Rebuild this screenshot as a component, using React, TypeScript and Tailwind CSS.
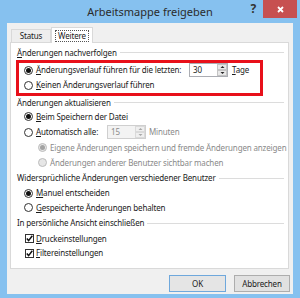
import clsx from "clsx";
import { ReactNode } from "react";

const Radio = ({ checked, disabled }: { checked?: boolean; disabled?: boolean }) => (
  <span
    className={clsx(
      "flex h-[9px] w-[9px] shrink-0 items-center justify-center rounded-full border",
      disabled ? "border-[#bcbcbc] bg-[#e6e6e6]" : "border-[#333] bg-white"
    )}
  >
    {checked && (
      <span className={clsx("h-[5px] w-[5px] rounded-full", disabled ? "bg-[#a3a3a3]" : "bg-[#111]")} />
    )}
  </span>
);

const Checkbox = () => (
  <span className="flex h-[9px] w-[9px] shrink-0 items-center justify-center border border-[#333] bg-white">
    <svg width="7" height="7" viewBox="0 0 7 7">
      <path d="M0.8 3.6 L2.6 5.6 L6.3 0.8" fill="none" stroke="#111" strokeWidth="1.5" />
    </svg>
  </span>
);

const SpinBox = ({ value, disabled }: { value: string; disabled?: boolean }) => (
  <div
    className={clsx(
      "flex h-[14px] w-[39px] shrink-0 border",
      disabled ? "border-[#cfcfcf] bg-[#f3f3f3] text-[#8a8a8a]" : "border-[#abadb3] bg-white"
    )}
  >
    <span className="flex-1 pl-[3px] leading-[12px]">{value}</span>
    <div className="flex w-[10px] flex-col">
      {["M0.5 3 L2.5 1 L4.5 3 Z", "M0.5 1 L2.5 3 L4.5 1 Z"].map((d) => (
        <div
          key={d}
          className={clsx(
            "flex flex-1 items-center justify-center border",
            disabled ? "border-[#dadada] bg-[#efefef]" : "border-[#c4c4c4] bg-[#e9e9e9]"
          )}
        >
          <svg width="5" height="4" viewBox="0 0 5 4">
            <path d={d} fill={disabled ? "#a8a8a8" : "#222"} />
          </svg>
        </div>
      ))}
    </div>
  </div>
);

const GroupHeading = ({ children, h }: { children: ReactNode; h: string }) => (
  <div className={clsx("flex items-center gap-[3px] pr-[4px]", h)}>
    <span className="whitespace-nowrap">{children}</span>
    <div className="h-px flex-1 bg-[#dcdcdc]" />
  </div>
);

const Row = ({ h, children, className }: { h: string; children: ReactNode; className?: string }) => (
  <div className={clsx("flex items-center whitespace-nowrap", h, className)}>{children}</div>
);

const App = () => {
  return (
    <div className="flex h-[298px] w-[300px] flex-col overflow-hidden bg-[#86c1ef] font-['Noto_Sans',sans-serif] text-[8px] tracking-[-0.15px] text-[#1a1a1a]">
      <div className="grid h-[23px] shrink-0 grid-cols-[1fr_auto_1fr]">
        <div />
        <div className="pt-[3px] text-[11px] leading-[18px] tracking-normal text-[#2b2b2b]">Arbeitsmappe freigeben</div>
        <div className="flex items-start justify-end">
          <span className="mr-[7px] pt-[2px] text-[12px] font-bold leading-[14px] text-[#333]">?</span>
          <div className="mr-[3px] flex h-[18px] w-[34px] items-center justify-center bg-[#c75050]">
            <svg width="7" height="7" viewBox="0 0 7 7">
              <path d="M1 1 L6 6 M6 1 L1 6" stroke="white" strokeWidth="1.8" />
            </svg>
          </div>
        </div>
      </div>

      <div className="mx-[7px] mb-[4px] flex flex-1 flex-col bg-[#f0f0f0] px-[3px] pt-[4px]">
        <div className="flex h-[15px] items-end pl-[1px]">
          <div className="flex h-[13px] w-[40px] items-center justify-center border border-b-0 border-[#d9d9d9] bg-[#eeeeee]">
            Status
          </div>
          <div className="relative z-10 -mb-px flex h-[16px] w-[42px] items-center justify-center border border-b-0 border-[#d9d9d9] bg-white">
            <span className="border border-dotted border-[#555] px-[2px] leading-[10px]">Weitere</span>
          </div>
        </div>

        <div className="mr-[1px] flex h-[227px] flex-col border border-[#d9d9d9] bg-white pl-[6px] pt-[2px]">
          <GroupHeading h="h-[15px]">
            <u>Ä</u>nderungen nachverfolgen
          </GroupHeading>
          <div className="-ml-px flex h-[36px] w-[247px] flex-col border-[3px] border-[#e8101a] pl-[5px]">
            <Row h="h-[14px]">
              <Radio checked />
              <span className="ml-[3px] w-[153px]">
                <u>Ä</u>nderungsverlauf führen für die letzten:
              </span>
              <SpinBox value="30" />
              <span className="ml-[4px]">
                <u>T</u>age
              </span>
            </Row>
            <Row h="h-[16px]">
              <Radio />
              <span className="ml-[3px]">
                <u>K</u>einen Änderungsverlauf führen
              </span>
            </Row>
          </div>

          <GroupHeading h="h-[13px]">Änderungen aktualisieren</GroupHeading>
          <Row h="h-[15px]" className="pl-[7px]">
            <Radio checked />
            <span className="ml-[3px]">
              <u>B</u>eim Speichern der Datei
            </span>
          </Row>
          <Row h="h-[16px]" className="pl-[7px]">
            <Radio />
            <span className="ml-[3px] w-[71px]">
              <u>A</u>utomatisch alle:
            </span>
            <SpinBox value="15" disabled />
            <span className="ml-[3px] text-[#8a8a8a]">Minuten</span>
          </Row>
          <Row h="h-[15px]" className="pl-[21px] text-[#8a8a8a]">
            <Radio checked disabled />
            <span className="ml-[3px]">Eigene Änderungen speichern und fremde Änderungen anzeigen</span>
          </Row>
          <Row h="h-[15px]" className="pl-[21px] text-[#8a8a8a]">
            <Radio disabled />
            <span className="ml-[3px]">Änderungen anderer Benutzer sichtbar machen</span>
          </Row>

          <GroupHeading h="h-[16px]">Widersprüchliche Änderungen verschiedener Benutzer</GroupHeading>
          <Row h="h-[14px]" className="pl-[7px]">
            <Radio checked />
            <span className="ml-[3px]">
              <u>M</u>anuel entscheiden
            </span>
          </Row>
          <Row h="h-[15px]" className="pl-[7px]">
            <Radio />
            <span className="ml-[3px]">
              <u>G</u>espeicherte Änderungen behalten
            </span>
          </Row>

          <GroupHeading h="h-[16px]">In persönliche Ansicht einschließen</GroupHeading>
          <Row h="h-[15px]" className="pl-[8px]">
            <Checkbox />
            <span className="ml-[2px]">
              <u>D</u>ruckeinstellungen
            </span>
          </Row>
          <Row h="h-[14px]" className="pl-[8px]">
            <Checkbox />
            <span className="ml-[2px]">
              <u>F</u>iltereinstellungen
            </span>
          </Row>
        </div>

        <div className="mt-[6px] flex justify-end gap-[8px]">
          <button className="flex h-[17px] w-[57px] items-center justify-center border border-[#6fa8dc] bg-[#e5e5e5]">
            OK
          </button>
          <button className="flex h-[17px] w-[56px] items-center justify-center border border-[#adadad] bg-[#e1e1e1]">
            Abbrechen
          </button>
        </div>
      </div>
    </div>
  );
};

export default App;
